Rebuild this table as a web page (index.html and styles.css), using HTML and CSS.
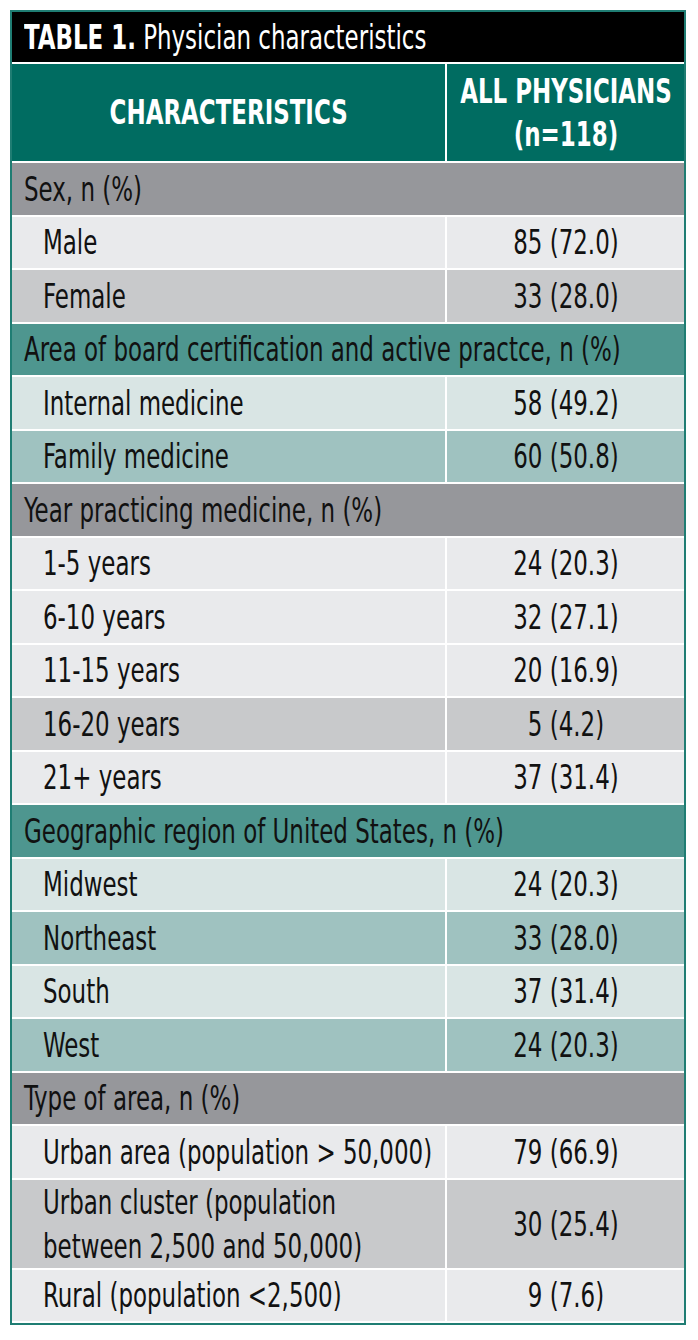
FILE: index.html
```html
<!DOCTYPE html>
<html>
<head>
<meta charset="utf-8">
<link rel="stylesheet" href="styles.css">
</head>
<body>
<div class="frame">
  <div class="title"><span class="t"><b>TABLE 1.</b> Physician characteristics</span></div>
  <table class="tbl">
    <thead>
      <tr class="head">
        <th class="c1"><span class="t">CHARACTERISTICS</span></th>
        <th class="c2"><span class="t">ALL PHYSICIANS<br>(n=118)</span></th>
      </tr>
    </thead>
    <tbody>
      <tr class="sec gray"><td colspan="2"><span class="t">Sex, n (%)</span></td></tr>
      <tr class="g1"><td class="lab"><span class="t">Male</span></td><td class="val"><span class="t">85 (72.0)</span></td></tr>
      <tr class="g2"><td class="lab"><span class="t">Female</span></td><td class="val"><span class="t">33 (28.0)</span></td></tr>

      <tr class="sec teal"><td colspan="2"><span class="t">Area of board certification and active practce, n (%)</span></td></tr>
      <tr class="t1"><td class="lab"><span class="t">Internal medicine</span></td><td class="val"><span class="t">58 (49.2)</span></td></tr>
      <tr class="t2"><td class="lab"><span class="t">Family medicine</span></td><td class="val"><span class="t">60 (50.8)</span></td></tr>

      <tr class="sec gray"><td colspan="2"><span class="t">Year practicing medicine, n (%)</span></td></tr>
      <tr class="g1"><td class="lab"><span class="t">1-5 years</span></td><td class="val"><span class="t">24 (20.3)</span></td></tr>
      <tr class="g1"><td class="lab"><span class="t">6-10 years</span></td><td class="val"><span class="t">32 (27.1)</span></td></tr>
      <tr class="g1"><td class="lab"><span class="t">11-15 years</span></td><td class="val"><span class="t">20 (16.9)</span></td></tr>
      <tr class="g2"><td class="lab"><span class="t">16-20 years</span></td><td class="val"><span class="t">5 (4.2)</span></td></tr>
      <tr class="g1"><td class="lab"><span class="t">21+ years</span></td><td class="val"><span class="t">37 (31.4)</span></td></tr>

      <tr class="sec teal"><td colspan="2"><span class="t">Geographic region of United States, n (%)</span></td></tr>
      <tr class="t1"><td class="lab"><span class="t">Midwest</span></td><td class="val"><span class="t">24 (20.3)</span></td></tr>
      <tr class="t2"><td class="lab"><span class="t">Northeast</span></td><td class="val"><span class="t">33 (28.0)</span></td></tr>
      <tr class="t1"><td class="lab"><span class="t">South</span></td><td class="val"><span class="t">37 (31.4)</span></td></tr>
      <tr class="t2"><td class="lab"><span class="t">West</span></td><td class="val"><span class="t">24 (20.3)</span></td></tr>

      <tr class="sec gray"><td colspan="2"><span class="t">Type of area, n (%)</span></td></tr>
      <tr class="g1"><td class="lab"><span class="t">Urban area (population &gt; 50,000)</span></td><td class="val"><span class="t">79 (66.9)</span></td></tr>
      <tr class="g2 tall"><td class="lab"><span class="t">Urban cluster (population<br>between 2,500 and 50,000)</span></td><td class="val"><span class="t">30 (25.4)</span></td></tr>
      <tr class="g1"><td class="lab"><span class="t">Rural (population &lt;2,500)</span></td><td class="val"><span class="t">9 (7.6)</span></td></tr>
    </tbody>
  </table>
</div>
</body>
</html>
```
FILE: styles.css
```css
html, body {
  margin: 0;
  padding: 0;
  background: #ffffff;
  overflow: hidden;
}
body {
  padding: 10px 12px 0 10px;
  font-family: "DejaVu Sans Condensed", "DejaVu Sans", sans-serif;
  font-stretch: condensed;
  color: #111;
}
/* Condensed lettering: the text box is made 1/0.75 wider, then squeezed back */
.t {
  display: block;
  width: 133.333%;
  white-space: nowrap;
  transform: scaleX(0.75);
  transform-origin: left center;
}
.frame {
  width: 672px;
  border: 2px solid #1f7d73;
  background: #fff;
  overflow: hidden;
}
.title {
  background: #000;
  color: #fff;
  height: 50px;
  line-height: 50px;
  font-size: 34px;
  padding-left: 12px;
  border-bottom: 2px solid #fff;
}
.title b {
  font-weight: bold;
}
.tbl {
  width: 672px;
  border-collapse: collapse;
  table-layout: fixed;
}
.tbl td, .tbl th {
  padding: 0;
  border: 2px solid #fff;
  border-left: none;
  border-right: none;
}
.tbl .c1 { width: 433px; }
.tbl td.lab, .tbl th.c1 {
  border-right: 2px solid #fff;
}
.head th {
  background: #006c61;
  color: #fff;
  font-weight: bold;
  font-size: 34px;
  line-height: 43px;
  height: 97px;
  border-top: none;
}
.head th .t,
.val .t {
  margin-left: -16.667%;
  text-align: center;
  transform-origin: center center;
}
.tbl td {
  height: 51.5px;
  font-size: 34px;
  line-height: 44px;
}
.sec td {
  padding-left: 12px;
}
.tbl td.lab {
  padding-left: 31px;
}
.gray td { background: #96979b; }
.teal td { background: #4e968f; }
.g1 td { background: #e9eaec; }
.g2 td { background: #c8c9cb; }
.t1 td { background: #d9e5e4; }
.t2 td { background: #9fc2c0; }
.tbl .tall td { height: 87.5px; }
```
